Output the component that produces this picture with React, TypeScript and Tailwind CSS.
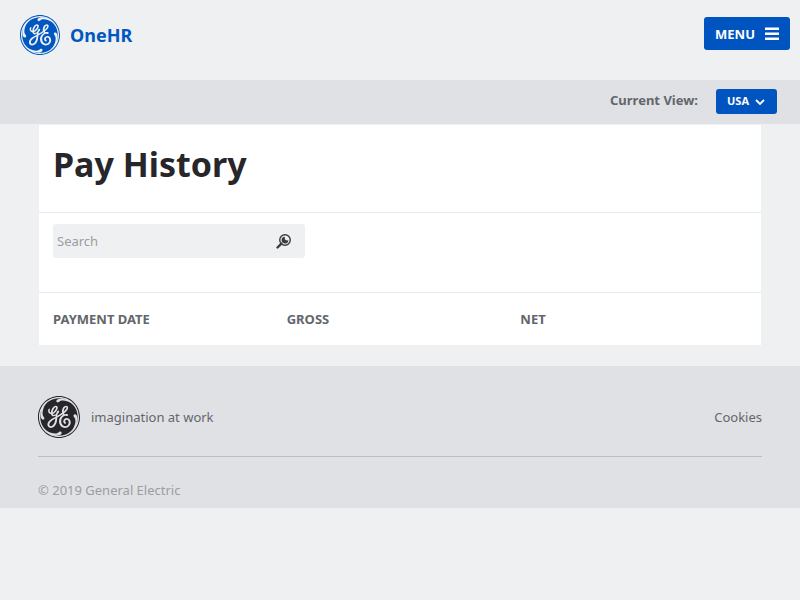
import React from "react";
import { SiGeneralelectric } from "react-icons/si";

const columns = ["Payment Date", "Gross", "Net"];

function SearchIcon() {
  return (
    <svg viewBox="0 0 14 14" className="size-[15px]" aria-hidden="true">
      <circle cx="8.4" cy="5.6" r="4.9" fill="none" stroke="#3a3a40" strokeWidth="1.3" />
      <path d="M8.2 2.5a3.200 3.200 0 1 0 3.400 3.600L9.400 5.800a1.500 1.500 0 0 1-1.200-1.500Z" fill="#3a3a40" />
      <path d="M5 9 1.4 12.6" stroke="#3a3a40" strokeWidth="2.2" strokeLinecap="round" />
    </svg>
  );
}

export default function App() {
  return (
    <div className="min-h-screen bg-[#eff0f2] font-['Noto_Sans',sans-serif] text-[13px] leading-5 text-[#63666a]">
      <header className="flex h-20 items-start justify-between pl-5 pr-[10px]">
        <a href="#home" className="mt-[15px] flex items-center gap-[10px] text-[#0057c2]">
          <SiGeneralelectric className="size-10" aria-hidden="true" />
          <span className="text-lg font-bold">OneHR</span>
        </a>
        <button
          type="button"
          className="mt-[17px] flex h-[33px] items-center gap-[10px] rounded-[3px] bg-[#0054bf] px-[11px] font-bold text-white"
        >
          MENU
          <svg viewBox="0 0 14 13" className="h-[13px] w-[14px]" fill="currentColor" aria-hidden="true">
            <path d="M0 .5h14V3H0zM0 5.5h14V8H0zM0 10.500h14V13H0z" />
          </svg>
        </button>
      </header>

      <div className="flex h-11 items-center justify-end gap-[18px] bg-[#e0e1e5] pb-[2px] pr-[23px]">
        <label htmlFor="view" className="pb-[2px] font-bold">
          Current View:
        </label>
        <div className="relative">
          <select
            id="view"
            defaultValue="USA"
            className="block h-[25px] w-[61px] appearance-none rounded-[3px] bg-[#0054bf] pl-[11px] text-[11px] font-bold text-white"
          >
            <option>USA</option>
          </select>
          <svg
            viewBox="0 0 10 6"
            className="pointer-events-none absolute right-3 top-[10px] h-[6px] w-[10px]"
            fill="none"
            stroke="#ffffff"
            strokeWidth="1.8"
            aria-hidden="true"
          >
            <path d="m1 1 4 4 4-4" />
          </svg>
        </div>
      </div>

      <main className="mx-[39px] mt-px bg-white">
        <h1 className="h-[87px] px-[14px] pt-[15px] text-[34px] font-bold leading-[48px] text-[#26262b]">
          Pay History
        </h1>
        <div className="border-y border-[#e9eaec] px-[14px] pb-[34px] pt-[11px]">
          <form className="flex h-[34px] w-[252px] rounded-[3px] bg-[#eff0f2]">
            <input
              type="text"
              placeholder="Search"
              aria-label="Search"
              className="min-w-0 flex-1 pl-1 placeholder:text-[#9b9da1]"
            />
            <button type="button" aria-label="Submit search" className="flex w-[43px] items-center justify-center">
              <SearchIcon />
            </button>
          </form>
        </div>
        <div className="pl-[14px] pr-[7px]">
          <table className="w-full table-fixed text-left">
            <thead>
              <tr className="h-[52px]">
                {columns.map((column) => (
                  <th key={column} scope="col" className="font-bold uppercase">
                    {column}
                  </th>
                ))}
              </tr>
            </thead>
          </table>
        </div>
      </main>

      <footer className="mt-[21px] bg-[#e0e1e5] px-[38px] pt-[30px]">
        <div className="flex items-center justify-between border-b border-[#bcbec4] pb-[18px]">
          <div className="flex items-center gap-[11px]">
            <SiGeneralelectric className="size-[42px] text-[#26262b]" aria-hidden="true" />
            <span>imagination at work</span>
          </div>
          <a href="#cookies">Cookies</a>
        </div>
        <p className="pb-2 pt-[23px] text-[#9b9da1]">© 2019 General Electric</p>
      </footer>
    </div>
  );
}
